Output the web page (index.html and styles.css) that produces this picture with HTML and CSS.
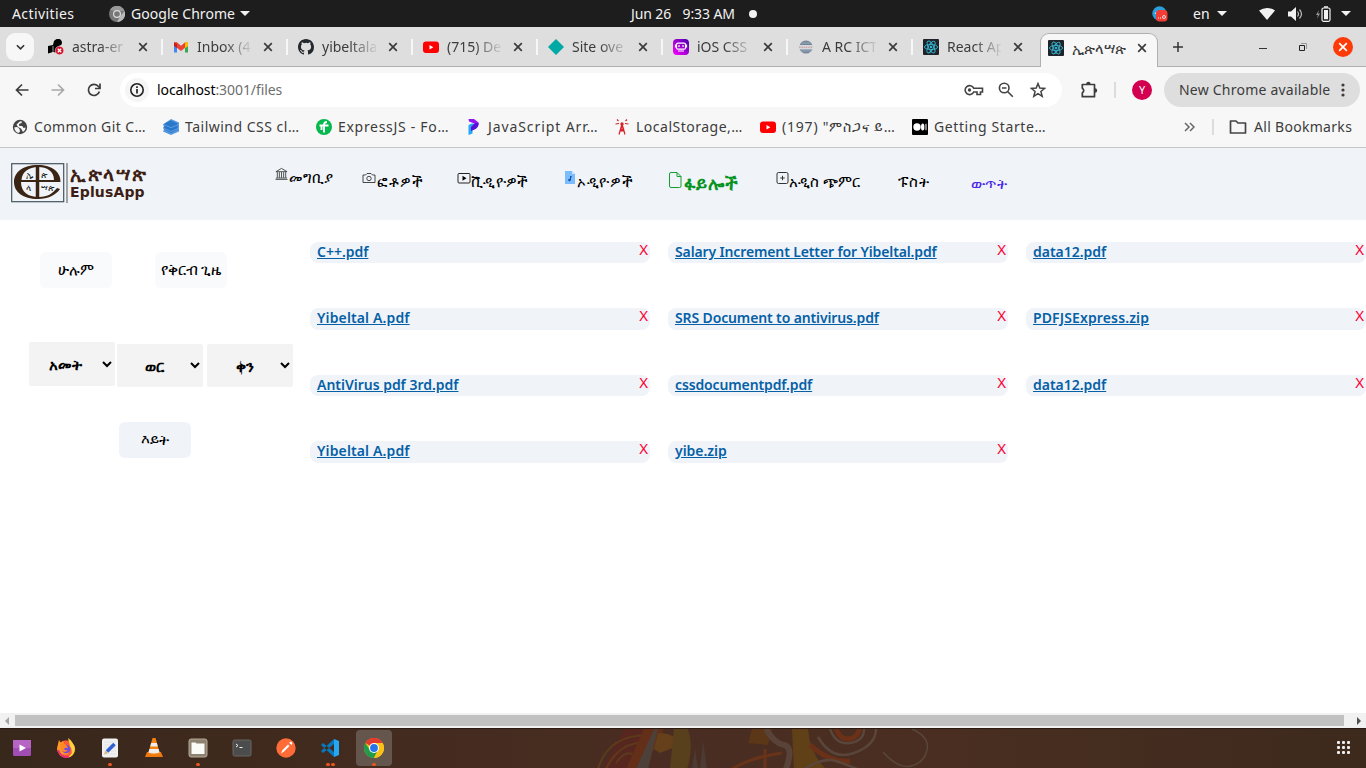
FILE: index.html
```html
<!DOCTYPE html>
<html lang="en">
<head>
<meta charset="utf-8">
<title>ኢጵላሣጵ</title>
<link rel="stylesheet" href="styles.css">
</head>
<body>
<svg width="0" height="0" class="defs">
  <symbol id="x" viewBox="0 0 10 10"><path d="M1.2 1.2l7.6 7.6M8.8 1.2L1.2 8.8" stroke="currentColor" stroke-width="1.7"/></symbol>
  <symbol id="yt" viewBox="0 0 16 16"><rect y="2.5" width="16" height="11.5" rx="3" fill="#f00"/><path d="M6.5 6v4.4l3.8-2.2z" fill="#fff"/></symbol>
  <symbol id="react" viewBox="0 0 16 16"><rect width="16" height="16" rx="1" fill="#20232a"/><g fill="none" stroke="#35b5d0" stroke-width=".9"><ellipse cx="8" cy="8" rx="6.6" ry="2.6"/><ellipse cx="8" cy="8" rx="6.6" ry="2.6" transform="rotate(60 8 8)"/><ellipse cx="8" cy="8" rx="6.6" ry="2.6" transform="rotate(120 8 8)"/></g><circle cx="8" cy="8" r="1.3" fill="#35b5d0"/></symbol>
</svg>

<header class="topbar">
  <span class="activities">Activities</span>
  <svg class="appicon" viewBox="0 0 16 16"><circle cx="8" cy="8" r="8" fill="#777"/><path d="M1 4A8 8 0 0 1 15.500 5H8z" fill="#999"/><path d="M15.500 5A8 8 0 0 1 8 16l3.500-6z" fill="#b9b9b9"/><circle cx="8" cy="8" r="4" fill="#ddd"/><circle cx="8" cy="8" r="2.800" fill="#777"/></svg>
  <span class="appname">Google Chrome</span><i class="caret"></i>
  <span class="clock"><span class="date">Jun 26</span><span class="time">9:33 AM</span><i class="dot"></i></span>
  <svg class="tray" viewBox="0 0 16 16"><circle cx="7.500" cy="7.500" r="7.200" fill="#2c9fdb"/><path d="M2.500 7l4-1.500v4z" fill="#fff"/><rect x="4" y="4" width="11.500" height="11.500" rx="3.500" fill="#f23c34"/><path d="M6 12h1M8 12h1" stroke="#fff"/><circle cx="12" cy="11" r="1.500" fill="none" stroke="#fff" stroke-width=".8"/></svg>
  <span class="lang">en</span><i class="caret"></i>
  <svg class="wifi" viewBox="0 0 16 12"><path d="M0 2.500Q8-2.500 16 2.500L8 12z" fill="#f2f2f2"/></svg>
  <svg class="volume" viewBox="0 0 16 14"><path d="M0 4.500h3L8 0v14L3 9.500H0z" fill="#f2f2f2"/><path d="M9.500 4.500q2 2.500 0 5M11.500 2.500q4 4.500 0 9" fill="none" stroke="#bbb" stroke-width="1.200"/></svg>
  <svg class="battery" viewBox="0 0 15 16"><path d="M3 4L0 9h2L1 13l3-5.500H2z" fill="#999"/><rect x="6" y="2" width="8" height="13.300" rx="1.500" fill="none" stroke="#f2f2f2" stroke-width="1.200"/><path d="M8 .3h4v1.400H8zM8 4h4v9.300H8z" fill="#f2f2f2"/></svg>
  <i class="caret last"></i>
</header>

<section class="tabstrip">
  <div class="tabsearch"><svg viewBox="0 0 10 6"><path d="M1 1l4 4 4-4" fill="none" stroke="#333" stroke-width="1.800"/></svg></div>
  <div class="tabs">
    <div class="tab"><svg class="fav" viewBox="0 0 16 16"><path d="M0 7l5-1 1-4q4-4 7-1 2 3 0 5l-2 1v7L5 13l-5 1.500z" fill="#000"/><path d="M5 7v7" stroke="#fff" stroke-width=".6"/><circle cx="11.500" cy="11.500" r="4.300" fill="#d3132c" stroke="#fff" stroke-width=".5"/><path d="M9.800 9.800l3.400 3.400m0-3.400l-3.400 3.400" stroke="#fff" stroke-width="1.300"/></svg><span class="title">astra-er</span><svg class="close"><use href="#x"/></svg></div>
    <div class="tab"><svg class="fav" viewBox="0 0 16 16"><path d="M1 3v10.500h3V6z" fill="#4285f4"/><path d="M15 3v10.500h-3V6z" fill="#34a853"/><path d="M1 3.500L3.500 3 8 6.700 12.500 3l2.500.5v3L8 12 1 6.500z" fill="#ea4335"/><path d="M12 5V3.500q1-1 3-.5v4.200l-3 2z" fill="#fbbc04"/><path d="M1 3.200l3 2V9L1 7z" fill="#c5221f"/></svg><span class="title">Inbox (4</span><svg class="close"><use href="#x"/></svg></div>
    <div class="tab"><svg class="fav" viewBox="0 0 16 16"><path fill="#24292f" d="M8 0C3.580 0 0 3.580 0 8c0 3.540 2.290 6.530 5.470 7.590.4.070.55-.17.55-.38 0-.19-.01-.82-.01-1.490-2.010.37-2.530-.49-2.690-.94-.09-.23-.48-.94-.82-1.130-.28-.15-.68-.52-.01-.53.63-.01 1.080.58 1.230.82.72 1.210 1.870.87 2.330.66.070-.52.28-.87.51-1.070-1.780-.2-3.640-.89-3.640-3.950 0-.87.31-1.590.82-2.150-.08-.2-.36-1.020.08-2.120 0 0 .67-.21 2.200.82a7.500 7.500 0 0 1 4 0c1.530-1.040 2.200-.82 2.200-.82.44 1.100.16 1.920.08 2.120.51.56.82 1.270.82 2.150 0 3.070-1.870 3.750-3.650 3.950.29.25.54.73.54 1.480 0 1.070-.01 1.930-.01 2.200 0 .21.15.46.55.38A8 8 0 0 0 16 8c0-4.420-3.580-8-8-8z"/></svg><span class="title">yibeltala</span><svg class="close"><use href="#x"/></svg></div>
    <div class="tab"><svg class="fav"><use href="#yt"/></svg><span class="title">(715) De</span><svg class="close"><use href="#x"/></svg></div>
    <div class="tab"><svg class="fav" viewBox="0 0 16 16"><path d="M8 0l8 8-8 8-8-8z" fill="#00a9a5"/></svg><span class="title">Site ove</span><svg class="close"><use href="#x"/></svg></div>
    <div class="tab"><svg class="fav" viewBox="0 0 16 16"><defs><linearGradient id="g1" x1="0" x2="1" y1="1" y2="0"><stop stop-color="#f0f"/><stop offset="1" stop-color="#40a"/></linearGradient></defs><rect width="16" height="16" rx="4" fill="url(#g1)"/><rect x="3.500" y="4.200" width="9" height="6" rx="1.500" fill="none" stroke="#fff" stroke-width="1.200"/><path d="M2.500 5.500v3M13.500 5.500v3M5 12h6" stroke="#fff" stroke-width="1.200"/><path d="M6 6.200v1.600M10 6.200v1.600" stroke="#fff" stroke-width="1.600"/></svg><span class="title">iOS CSS</span><svg class="close"><use href="#x"/></svg></div>
    <div class="tab"><svg class="fav" viewBox="0 0 16 16"><circle cx="8" cy="8" r="6.600" fill="#75869b"/><path d="M1 6h14v4.500H1z" fill="#d5d9de"/><path d="M1 8.200h14" stroke="#ce8f8f" stroke-dasharray="1.500 .8"/><path d="M3 4h10M3 12h10" stroke="#aab5c2" stroke-width=".7"/></svg><span class="title">A RC ICT</span><svg class="close"><use href="#x"/></svg></div>
    <div class="tab"><svg class="fav"><use href="#react"/></svg><span class="title">React Ap</span><svg class="close"><use href="#x"/></svg></div>
    <div class="tab active"><svg class="fav"><use href="#react"/></svg><span class="title amh">ኢጵላሣጵ</span><svg class="close"><use href="#x"/></svg></div>
  </div>
  <svg class="newtab" viewBox="0 0 12 12"><path d="M6 1v10M1 6h10" stroke="#333" stroke-width="1.500"/></svg>
  <svg class="minimize" viewBox="0 0 8 8"><path d="M0 7.500h8" stroke="#333" stroke-width="1"/></svg>
  <svg class="restore" viewBox="0 0 8 8"><path d="M.5 2.500h5v5h-5z" fill="none" stroke="#222"/><path d="M2 .5h5.500V6" fill="none" stroke="#999"/></svg>
  <div class="winclose"><svg viewBox="0 0 10 10"><use href="#x"/></svg></div>
</section>

<section class="toolbar">
  <svg class="back" viewBox="0 0 16 16"><path d="M14.500 8H3M8 2.500L2.500 8 8 13.500" fill="none" stroke="#3c3c3c" stroke-width="1.700"/></svg>
  <svg class="fwd" viewBox="0 0 16 16"><path d="M1.500 8H13M8 2.500L13.500 8 8 13.500" fill="none" stroke="#a9a9a9" stroke-width="1.700"/></svg>
  <svg class="reload" viewBox="0 0 16 16"><path d="M13.400 9.500A5.600 5.600 0 1 1 12.500 4.500L14 6" fill="none" stroke="#3c3c3c" stroke-width="1.700"/><path d="M14 1.500V6.500H9" fill="none" stroke="#3c3c3c" stroke-width="1.700"/></svg>
  <div class="omnibox">
    <span class="info"><svg viewBox="0 0 16 16"><circle cx="8" cy="8" r="6.200" fill="none" stroke="#222" stroke-width="1.600"/><path d="M8 7v4.500M8 4.200v1.700" stroke="#222" stroke-width="1.700"/></svg></span>
    <span class="url"><b>localhost</b>:3001/files</span>
    <svg class="key" viewBox="0 0 20 12"><path d="M9.700 4.200H18.500V8H16.500v2.500H13V8H9.700A4.500 4.500 0 1 1 9.700 4.200z" fill="none" stroke="#444" stroke-width="1.600"/><circle cx="5.500" cy="6" r="1.700" fill="#444"/></svg>
    <svg class="lens" viewBox="0 0 16 16"><circle cx="6.200" cy="6" r="4.800" fill="none" stroke="#444" stroke-width="1.600"/><path d="M9.800 9.800l5 5M4 6h4.500" stroke="#444" stroke-width="1.600"/></svg>
    <svg class="star" viewBox="0 0 16 16"><path d="M8 1.500l1.800 4.600 4.900.3-3.800 3.100 1.300 4.800L8 11.600l-4.200 2.700 1.300-4.800-3.800-3.100 4.900-.3z" fill="none" stroke="#444" stroke-width="1.500"/></svg>
  </div>
  <svg class="puzzle" viewBox="0 0 18 18"><path d="M2.300 3.500h12.200V15.700H2.300V12Q5.200 9.600 2.300 7.200z" fill="none" stroke="#3c3c3c" stroke-width="1.700" stroke-linejoin="round"/><path d="M6.200 3a2.200 2.200 0 0 1 4.400 0zM15 7.300a2.200 2.200 0 0 1 0 4.400z" fill="#3c3c3c"/></svg>
  <i class="vline"></i>
  <span class="avatar">Y</span>
  <div class="update"><span>New Chrome available</span><svg viewBox="0 0 4 14"><circle cx="2" cy="2" r="1.600"/><circle cx="2" cy="7" r="1.600"/><circle cx="2" cy="12" r="1.600"/></svg></div>
</section>

<section class="bookmarks">
  <div class="bm b1"><svg viewBox="0 0 16 16"><circle cx="8" cy="8" r="7.200" fill="#454545"/><path d="M2.200 8.500q3-1 4.500.5t1.300 3.500l-1.500 1.500Q3 13 2.200 8.500zM8 2.200l2 .3-.5 1.500-2.500 1 .3 2h3l1.200 2 2.200-.5q-.2 3-2.700 4.500L9 9.500 6 8 4.500 5.500z" fill="#f7f7f7"/></svg><span>Common Git C…</span></div>
  <div class="bm b2"><svg viewBox="0 0 16 16"><path d="M8 0l8 3.500v9L8 16l-8-3.500 1-2-1-2 1-1-1-2z" fill="#5598df"/><path d="M8 1.500l6.500 3v6L8 14l-6.500-3.500v-6z" fill="#2877ca"/><path d="M0 5.200l8 3.500 8-3.500M0 9l8 3.500L16 9" fill="none" stroke="#6aa6e6" stroke-width=".8"/></svg><span>Tailwind CSS cl…</span></div>
  <div class="bm b3"><svg viewBox="0 0 16 16"><circle cx="8" cy="8" r="8" fill="#06b84d"/><path d="M3.500 6.500h9M8 13.500V5.500q.3-2.500 3-2.500M5.500 7v4" stroke="#fff" stroke-width="1.900" fill="none"/></svg><span>ExpressJS - Fo…</span></div>
  <div class="bm b4"><svg viewBox="0 0 16 16"><path d="M2.500 0H8l4.500 3.500q.5 3.500-3 6l-2.500 1V8l1.500-3.500-5.500-2z" fill="#9316f2"/><path d="M2.500 6l3.500-1.500h2.500L6.500 9v5.500l-4 1.500z" fill="#23a8f8"/><path d="M5 8l3.500-3.500 4-.5q.5 4-4 6.500L5 12z" fill="#5a10d8"/></svg><span>JavaScript Arr…</span></div>
  <div class="bm b5"><svg viewBox="0 0 16 16"><path d="M8 5L5 15.500M8 5l3 10.500M6.500 8.500h3M5.500 12h5M6 12l4-3M10 12L6.500 9M5 4.500L1.500 5M4.500 2L3 .5M11 4.500l3.500.5M11.500 2L13 .5" stroke="#d8232a" stroke-width="1.200" fill="none"/><circle cx="8" cy="5" r="1.700" fill="#d8232a"/></svg><span>LocalStorage,…</span></div>
  <div class="bm b6"><svg><use href="#yt"/></svg><span>(197) "ምስጋና ይ…</span></div>
  <div class="bm b7"><svg viewBox="0 0 16 16"><rect width="16" height="16" rx="1"/><circle cx="5" cy="8" r="3.700" fill="#fff"/><ellipse cx="10.700" cy="8" rx="1.700" ry="3.500" fill="#fff"/><path d="M14 4.800v6.400" stroke="#fff"/></svg><span>Getting Starte…</span></div>
  <svg class="more" viewBox="0 0 11 10"><path d="M1 1l4 4-4 4M6 1l4 4-4 4" fill="none" stroke="#666" stroke-width="1.500"/></svg>
  <i class="vline"></i>
  <svg class="folder" viewBox="0 0 18 14"><path d="M1.500 1h5.500l2 2h7.500v10h-15z" fill="none" stroke="#444" stroke-width="1.700" stroke-linejoin="round"/></svg>
  <span class="all">All Bookmarks</span>
</section>

<nav class="appnav">
  <div class="logo">
    <svg class="mark" viewBox="0 0 57 40"><rect x=".7" y=".7" width="52" height="38" fill="none" stroke="#46545d" stroke-width="1.200"/><path d="M56 0v40" stroke="#858b91" stroke-width="1.500"/><path fill-rule="evenodd" fill="#3a2414" d="M27 2C12 2 3 9 3 19s9 17 24 17c10 0 18-4 22-10l-3-1c-4 5-9 9-18 9-11 0-18-5-18-15h39.500C50 9 41 2 27 2zM10.500 17C11 9 18 4 27 4s16 4 16 13z"/><path d="M26.500 3v32" stroke="#3a2414" stroke-width="3.500"/><g font-family="Noto Sans, sans-serif" font-size="9" fill="#222"><text x="14.500" y="15">ኢ</text><text x="30" y="15">ጵ</text><text x="14.500" y="28">ላ</text><text x="30" y="28">ሣጵ</text></g></svg>
    <div class="brand"><span class="brand-am">ኢጵላሣጵ</span><span class="brand-en">EplusApp</span></div>
  </div>
  <a class="item n1"><svg viewBox="0 0 14 14"><path d="M1 4.500L7 1l6 3.500zM2.500 5v6M4.700 5v6M7 5v6M9.300 5v6M11.500 5v6M1 11.300h12M.5 12.800h13" fill="none" stroke="#333" stroke-width=".9"/></svg><span>መግቢያ</span></a>
  <a class="item n2"><svg viewBox="0 0 14 14"><path d="M1 4h2.500L5 2.500h4L10.500 4H13v7.500H1z" fill="none" stroke="#333" stroke-width=".9"/><circle cx="7" cy="7.500" r="2.200" fill="none" stroke="#333" stroke-width=".9"/></svg><span>ፎቶዎች</span></a>
  <a class="item n3"><svg viewBox="0 0 14 14"><rect x="1" y="2.500" width="12" height="9.500" rx="1" fill="none" stroke="#222"/><path d="M5.500 4.700v5L9.500 7.200z"/></svg><span>ቪዲዮዎች</span></a>
  <a class="item n4"><svg viewBox="0 0 12 14"><path d="M1 0h7l3 3v10H1z" fill="#7bbcff"/><path d="M8 0v3h3z" fill="#d3e8ff"/><path d="M6.500 5v4M6.500 5.500l1.500.5" stroke="#1456a8"/><circle cx="5.500" cy="9" r="1.300" fill="#1456a8"/></svg><span>ኦዲዮዎች</span></a>
  <a class="item n5"><svg viewBox="0 0 14 18"><path d="M3 1.500h6l4 4V15q0 1.500-1.500 1.500h-8.500Q1.500 16.500 1.500 15V3Q1.500 1.500 3 1.500zM9 1.500v4h4" fill="none" stroke="#12a030"/></svg><span>ፋይሎች</span></a>
  <a class="item n6"><svg viewBox="0 0 14 14"><rect x="1" y="1.500" width="11" height="11" rx="1.500" fill="none" stroke="#333"/><path d="M6.500 4.800v4.400M4.300 7h4.400" stroke="#333"/></svg><span>አዲስ ጭምር</span></a>
  <a class="item n7"><span>ፑስት</span></a>
  <a class="item n8"><span>ውጥት</span></a>
</nav>

<main class="content">
  <aside class="filters">
    <div class="buttons"><button>ሁሉም</button><button>የቅርብ ጊዜ</button></div>
    <div class="selects">
      <div class="select year"><span>አመት</span><svg viewBox="0 0 10 7"><path d="M1 1l4 4 4-4" fill="none" stroke="#000" stroke-width="2"/></svg></div>
      <div class="select"><span>ወር</span><svg viewBox="0 0 10 7"><path d="M1 1l4 4 4-4" fill="none" stroke="#000" stroke-width="2"/></svg></div>
      <div class="select day"><span>ቀን</span><svg viewBox="0 0 10 7"><path d="M1 1l4 4 4-4" fill="none" stroke="#000" stroke-width="2"/></svg></div>
    </div>
    <button class="view">እይት</button>
  </aside>
  <section class="files">
    <div class="file"><a>C++.pdf</a><b>X</b></div>
    <div class="file"><a class="long">Salary Increment Letter for Yibeltal.pdf</a><b>X</b></div>
    <div class="file"><a>data12.pdf</a><b>X</b></div>
    <div class="file"><a class="wide">Yibeltal A.pdf</a><b>X</b></div>
    <div class="file"><a class="long">SRS Document to antivirus.pdf</a><b>X</b></div>
    <div class="file"><a class="wide">PDFJSExpress.zip</a><b>X</b></div>
    <div class="file"><a>AntiVirus pdf 3rd.pdf</a><b>X</b></div>
    <div class="file"><a class="long">cssdocumentpdf.pdf</a><b>X</b></div>
    <div class="file"><a>data12.pdf</a><b>X</b></div>
    <div class="file"><a class="wide">Yibeltal A.pdf</a><b>X</b></div>
    <div class="file"><a>yibe.zip</a><b>X</b></div>
  </section>
</main>

<div class="scrollbar"><svg viewBox="0 0 4 8"><path d="M4 0v8L0 4z" fill="#a3a3a3"/></svg><i></i><svg viewBox="0 0 4 8"><path d="M0 0v8l4-4z" fill="#505050"/></svg></div>

<footer class="dock">
  <svg class="art" viewBox="-50 0 370 40"><g fill="none"><path d="M-16 0H10L-8 40H-38l10-18z" fill="#57261f"/><path d="M-42 40Q-32 6 8 6M-34 40Q-20 12 6 14M-24 34q10-14 18-8" stroke="#5c3a1c" stroke-width="2"/><path d="M4 0L24 0 4 40H-14z" fill="#632f19"/><path d="M14 0L18 0 8 40H-4z" fill="#4d4039"/><path d="M18 4q18 0 22 12l-20 8-6-4z" fill="#65401a"/><path d="M34 0h14q6 18-1 40H30z" fill="#59401d"/><path d="M60 40l3-28 4 28zM52 40l3-20 3 20z" fill="#4b3b34"/><path d="M112 0h20l-4 16-20-2z" fill="#5b3718"/><path d="M92 40q20-12 50-16M125 40v-20" stroke="#683319" stroke-width="3"/><path d="M152 0h16q2 25 18 40h-32z" fill="#604016"/><path d="M126 0q8 14 18 16t2 24" stroke="#594237" stroke-width="6"/><path d="M170 16q20 18 40 16M196 0q4 10 12 10t12-10" stroke="#6b3118" stroke-width="5"/><path d="M178 8q14 24 36 16t22-24M190 0q6 16 20 14t14-14M164 40q20-12 32-8t26 10" stroke="#59453a" stroke-width="2.500"/><path d="M272 0q18 8 15 21t-16 16-28-14" stroke="#59463b" stroke-width="1.500"/></g></svg>
  <div class="slot"><svg viewBox="0 0 20 20"><rect x="1" y="2" width="18" height="16" rx="1.500" fill="#a04db4"/><path d="M1 2h18v8H1z" fill="#b765c4"/><path d="M7.500 6.500v7l6.500-3.500z" fill="#fff"/></svg></div>
  <div class="slot"><svg viewBox="0 0 20 20"><circle cx="10" cy="11" r="8.800" fill="#ff5a36"/><path d="M12 0q3 2 4 4 3 4 3 7 0 7-8 9 8-5 3-12z" fill="#ffd33d"/><path d="M2 6l1-4 2 3 2-2 1 3 6 3-2 7q-8 2-11-4z" fill="#ff9a25"/><circle cx="10" cy="11" r="4.300" fill="#784be0"/><path d="M4 6q6-1 8 4-3-1-4 1 1 2 4 1-3 4-7 0z" fill="#ff8724"/><path d="M2 12q3 8 11 7" stroke="#e82c77" stroke-width="2" fill="none"/></svg></div>
  <div class="slot"><svg viewBox="0 0 20 20"><rect x="2" y=".5" width="16" height="19" rx="2" fill="#f1f1f1"/><path d="M4 4h12M4 7h12M4 10h12M4 13h12M4 16h12" stroke="#ddd" stroke-width=".7"/><path d="M7 13.500L14.500 6" stroke="#315fd4" stroke-width="3.600"/><path d="M4 16.500l1.500-4 2.500 2.500z" fill="#d9b278"/></svg><i class="run"></i></div>
  <div class="slot"><svg viewBox="0 0 20 20"><path d="M3 14h14l2 5H1z" fill="#ed7811"/><path d="M8.500 0h3L16 16q-6 2-12 0z" fill="#f58211"/><path d="M7.200 5h5.600l1 3.500H6.200zM5.400 11h9.200l1 3.500q-6 2-11.200 0z" fill="#eee"/></svg></div>
  <div class="slot"><svg viewBox="0 0 20 20"><rect x="1" y="1" width="18" height="18" rx="2" fill="#8d816f" stroke="#b5aa99"/><path d="M3.500 4.500h4l1 1h8v10.500h-13z" fill="#fafaf7"/></svg><i class="run"></i></div>
  <div class="slot"><svg viewBox="0 0 20 20"><rect x="1" y="2" width="18" height="16" rx="1.500" fill="#4c4c4c" stroke="#666"/><path d="M4 6l2 1.500L4 9M7.500 9.500h3" fill="none" stroke="#eee"/></svg></div>
  <div class="slot"><svg viewBox="0 0 20 20"><circle cx="10" cy="10" r="9.700" fill="#ff6c37"/><path d="M5 15.500l1.500-3.500L12 6.500l1.500 1.500L8 13.500zM13 4.500l2-1 1.500 1.500-1 2z" fill="#fff"/></svg></div>
  <div class="slot"><svg viewBox="0 0 20 20"><path d="M14 1l5 2v14l-5 2z" fill="#25a7f2"/><path d="M14 1v5L3 15l-2-2zM14 19v-5L3 5 1 7z" fill="#0878bd"/></svg><i class="run two"></i></div>
  <div class="slot current"><svg viewBox="0 0 20 20"><circle cx="10" cy="10" r="10" fill="#fbc116"/><path d="M10 10L1.300 5A10 10 0 0 1 18.700 5z" fill="#e33b2e"/><path d="M1.300 5A10 10 0 0 0 10 20l4-8H6z" fill="#229b4b"/><path d="M18.700 5H10v5l4 2-4 8A10 10 0 0 0 18.700 5z" fill="#fbc116"/><circle cx="10" cy="10" r="5" fill="#fff"/><circle cx="10" cy="10" r="3.900" fill="#2775e9"/></svg><i class="run"></i></div>
  <svg class="grid" viewBox="0 0 14 14"><g fill="#eee"><rect x="0" y="0" width="3" height="3" rx="1"/><rect x="5" y="0" width="3" height="3" rx="1"/><rect x="10" y="0" width="3" height="3" rx="1"/><rect x="0" y="5" width="3" height="3" rx="1"/><rect x="5" y="5" width="3" height="3" rx="1"/><rect x="10" y="5" width="3" height="3" rx="1"/><rect x="0" y="10" width="3" height="3" rx="1"/><rect x="5" y="10" width="3" height="3" rx="1"/><rect x="10" y="10" width="3" height="3" rx="1"/></g></svg>
</footer>
</body>
</html>
```
FILE: styles.css
```css
* { box-sizing: border-box; }
body { margin: 0; width: 1366px; height: 768px; overflow: hidden; display: flex; flex-direction: column; font: 14px/20px "Noto Sans", sans-serif; color: #3c3c3c; background: #fff; }
svg { display: block; flex: none; }
span { white-space: nowrap; }
.defs { position: absolute; }

.topbar { height: 27px; flex: none; background: #1d1d1d; color: #f2f2f2; display: flex; align-items: center; font-size: 14px; }
.activities { width: 97px; padding-left: 12px; letter-spacing: .4px; }
.appicon { width: 16px; height: 16px; margin: 0 6px 0 12px; }
.appname { width: 104px; letter-spacing: .05px; }
.caret { width: 0; height: 0; border: 5px solid transparent; border-top-color: #f2f2f2; border-bottom: 0; margin-left: 5px; }
.clock { display: flex; align-items: center; margin-left: 381px; width: 126px; letter-spacing: -.1px; }
.date { width: 52px; }
.time { width: 67px; }
.dot { width: 8px; height: 8px; border-radius: 50%; background: #f2f2f2; flex: none; }
.tray { width: 16px; height: 16px; margin-left: 395px; }
.lang { margin-left: 25px; width: 19px; }
.wifi { width: 16px; height: 12px; margin-left: 32px; }
.volume { width: 16px; height: 14px; margin-left: 13px; }
.battery { width: 15px; height: 16px; margin-left: 12px; }
.caret.last { margin-left: 10px; }

.tabstrip { height: 40px; flex: none; background: #dedede; border-bottom: 1px solid #b0b0b0; display: flex; padding-top: 6px; }
.tabsearch { width: 28px; height: 28px; border-radius: 9px; background: #f7f7f7; margin-left: 6px; display: flex; align-items: center; justify-content: center; }
.tabsearch svg { width: 9px; height: 6px; }
.tabs { display: flex; margin-left: 6px; height: 34px; }
.tab { width: 125px; height: 28px; padding-left: 8px; display: flex; align-items: center; }
.tab:not(.active) { background: linear-gradient(#f7f7f7, #f7f7f7) 121px 6px / 2px 16px no-repeat; }
.tab:not(.active):nth-child(8) { background: none; }
.fav { width: 16px; height: 16px; }
.title { width: 54px; margin-left: 8px; -webkit-mask-image: linear-gradient(90deg, #000 50%, transparent 105%); mask-image: linear-gradient(90deg, #000 50%, transparent 105%); }
.close { width: 10px; height: 10px; margin-left: 12px; }
.tab.active { width: 118px; height: 34px; padding-bottom: 6px; background: #f7f7f7; border: 1px solid #b0b0b0; border-bottom: 0; border-radius: 9px 9px 0 0; padding-left: 7px; }
.active .title { -webkit-mask-image: none; mask-image: none; font-size: 14.500px; letter-spacing: .1px; }
.active .close { margin-left: 11px; }
.newtab { width: 12px; height: 12px; margin: 8px 0 0 14px; }
.minimize { width: 8px; height: 8px; margin: 8px 0 0 75px; }
.restore { width: 8px; height: 8px; margin: 10px 0 0 32px; }
.winclose { width: 20px; height: 20px; border-radius: 50%; background: #fc3b08; color: #fff; display: flex; align-items: center; justify-content: center; margin: 4px 0 0 26px; }
.winclose svg { width: 10px; height: 10px; }

.toolbar { height: 46px; flex: none; background: #f7f7f7; display: flex; align-items: center; }
.back, .fwd, .reload { width: 16px; height: 16px; }
.back { margin-left: 14px; }
.fwd { margin-left: 20px; }
.reload { margin-left: 20px; }
.omnibox { width: 942px; height: 34px; border-radius: 17px; background: #fff; margin-left: 18px; padding-left: 5px; display: flex; align-items: center; }
.info { width: 24px; height: 24px; border-radius: 50%; background: #f5f5f5; display: flex; align-items: center; justify-content: center; }
.info svg { width: 16px; height: 16px; }
.url { margin-left: 8px; width: 807px; color: #6e6e6e; letter-spacing: -.08px; }
.url b { font-weight: 400; color: #000; }
.key { width: 20px; height: 12px; }
.lens { width: 16px; height: 16px; margin-left: 14px; }
.star { width: 16px; height: 16px; margin-left: 16px; }
.puzzle { width: 18px; height: 18px; margin-left: 18px; }
.vline { width: 2px; height: 16px; background: #dcdcdc; flex: none; }
.toolbar .vline { margin-left: 16px; }
.avatar { width: 20px; height: 20px; border-radius: 50%; margin-left: 16px; background: #d2004f; color: #fff; text-align: center; font-size: 11px; }
.update { width: 196px; height: 34px; border-radius: 17px; background: #dedede; margin-left: 12px; padding-left: 15px; display: flex; align-items: center; }
.update span { width: 162px; letter-spacing: .22px; }
.update svg { width: 4px; height: 14px; fill: #3c3c3c; }

.bookmarks { height: 35px; flex: none; background: #f7f7f7; border-bottom: 1px solid #c6c6c6; display: flex; align-items: center; padding: 0 0 6px 12px; }
.bm { display: flex; align-items: center; gap: 6px; letter-spacing: .5px; }
.bm svg { width: 16px; height: 16px; }
.b1 { width: 151px; letter-spacing: .4px; } .b2 { width: 153px; } .b3 { width: 150px; letter-spacing: .7px; } .b4 { width: 148px; letter-spacing: .9px; } .b5 { width: 146px; } .b6 { width: 152px; letter-spacing: .8px; } .b7 { width: 272px; letter-spacing: .6px; }
.more { width: 11px; height: 10px; }
.bookmarks .vline { margin-left: 17px; }
.folder { width: 18px; height: 14px; margin-left: 15px; }
.all { margin-left: 7px; letter-spacing: .3px; }

.appnav { height: 72px; flex: none; background: #f0f4f9; display: flex; align-items: flex-start; color: #000; font-size: 14.500px; }
.logo { width: 275px; padding: 15px 0 0 11px; display: flex; gap: 2px; }
.mark { width: 57px; height: 40px; }
.brand { display: flex; flex-direction: column; color: #3d2013; font-weight: 700; }
.brand-am { font-size: 19px; line-height: 22px; height: 22px; letter-spacing: 1.600px; }
.brand-en { font: 700 14px/14px "DejaVu Sans", sans-serif; letter-spacing: .15px; }
.item { display: flex; align-items: flex-start; }
.item svg { width: 14px; height: 14px; }
.n1 { width: 87px; padding-top: 19px; } .n1 svg { width: 13px; margin-right: 1px; }
.n1 span { line-height: 20px; }
.n2 { width: 95px; padding-top: 23px; letter-spacing: 1px; } .n2 svg { margin-right: 1px; }
.n3 { width: 107px; padding-top: 23px; letter-spacing: .35px; }
.n4 { width: 104px; padding-top: 23px; letter-spacing: .7px; } .n4 svg { width: 12px; margin-right: 1px; }
.n5 { width: 108px; padding-top: 23px; color: #079321; font-weight: 700; font-size: 18px; letter-spacing: .9px; } .n5 svg { width: 14px; height: 18px; margin-right: 2px; }
.n5 span { padding-top: 2px; }
.n6 { width: 122px; padding-top: 23px; letter-spacing: .1px; } .n6 svg { margin-right: -1px; }
.n7 { width: 73px; padding-top: 23px; letter-spacing: .3px; }
.n8 { padding-top: 25px; color: #4a27e8; letter-spacing: .3px; }

.content { flex: 1; display: flex; min-height: 0; }
.filters { width: 310px; flex: none; padding-top: 32px; color: #000; }
.buttons { display: flex; gap: 43px; padding-left: 40px; }
button { width: 72px; height: 36px; padding: 0 0 2px; border: 0; border-radius: 6px; background: #f9fafc; font: 500 14.500px "Noto Sans", sans-serif; color: #000; white-space: nowrap; }
.selects { display: flex; padding: 54px 0 0 29px; gap: 2px; }
.select { width: 86px; height: 43px; margin-top: 2px; background: #f3f3f3; border-radius: 2px; display: flex; align-items: center; padding: 0 3px 0 2px; font-weight: 700; font-size: 14.500px; }
.select.year { height: 44px; margin-top: 0; padding-left: 0; }
.select.day { margin-left: 2px; }
.select span { flex: 1; text-align: center; }
.select svg { width: 10px; height: 7px; }
.view { display: block; margin: 35px 0 0 119px; background: #f0f4f9; }
.files { display: grid; grid-template-columns: repeat(3, 340px); grid-auto-rows: 21.400px; gap: 45px 18px; padding-top: 22px; align-content: start; }
.file { background: #f0f4f9; border-radius: 8px; display: flex; justify-content: space-between; padding: 0 2px 0 7px; }
.file a { color: #0560a6; font-weight: 600; font-size: 14px; line-height: 19px; text-decoration: underline; letter-spacing: -.02px; }
.file .long { letter-spacing: -.13px; }
.file .wide { letter-spacing: .13px; }
.file b { color: #ff0033; font-weight: 400; font-size: 15px; line-height: 15px; }

.scrollbar { height: 15px; flex: none; background: #f1f1f1; display: flex; align-items: center; padding: 0 5px; }
.scrollbar svg { width: 4px; height: 8px; }
.scrollbar i { width: 1329px; height: 11px; background: #c1c1c1; margin: 0 13px 0 6px; }
.dock { position: relative; height: 40px; flex: none; display: flex; border-top: 1px solid #2a1a11; background: linear-gradient(90deg, #38271b, #442b1f 30%, #4a2d22 50%, #492e21 70%, #3d2a1d); }
.art { position: absolute; left: 590px; top: 0; width: 370px; height: 40px; }
.slot { position: relative; width: 36px; height: 36px; margin: 1px 4px 0; border-radius: 4px; display: flex; align-items: center; justify-content: center; }
.slot svg { width: 20px; height: 20px; }
.slot.current { background: #65564d; }
.run { position: absolute; bottom: 0; left: 16px; width: 4px; height: 3px; border-radius: 2px; background: #e95420; }
.run.two { left: 14px; box-shadow: 5px 0 #e95420; }
.grid { width: 14px; height: 14px; margin: 12px 15px 0 auto; }
```
